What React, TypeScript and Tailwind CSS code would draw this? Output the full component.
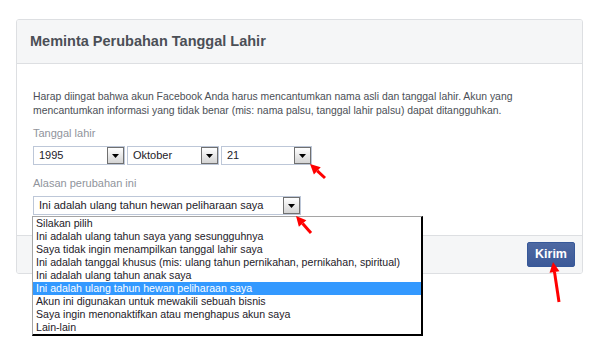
import React from 'react';

const reasons = [
  'Silakan pilih',
  'Ini adalah ulang tahun saya yang sesungguhnya',
  'Saya tidak ingin menampilkan tanggal lahir saya',
  'Ini adalah tanggal khusus (mis: ulang tahun pernikahan, pernikahan, spiritual)',
  'Ini adalah ulang tahun anak saya',
  'Ini adalah ulang tahun hewan peliharaan saya',
  'Akun ini digunakan untuk mewakili sebuah bisnis',
  'Saya ingin menonaktifkan atau menghapus akun saya',
  'Lain-lain',
];

function FakeSelect({ value, width }: { value: string; width: string }) {
  return (
    <div className={`${width} h-[19px] flex items-center border border-[#bdc7d8] bg-white`}>
      <span className="flex-1 pl-[5px] text-[11px] text-[#1d2129] truncate">{value}</span>
      <span className="w-[17px] h-[17px] flex items-center justify-center border border-[#707070] bg-gradient-to-b from-white to-[#d4d4d4]">
        <svg width="7" height="4" viewBox="0 0 7 4">
          <polygon points="0,0 7,0 3.5,4" fill="#000" />
        </svg>
      </span>
    </div>
  );
}

function RedArrow({ x1, y1, x2, y2 }: { x1: number; y1: number; x2: number; y2: number }) {
  // tail (x1,y1) -> tip (x2,y2)
  const a = Math.atan2(y2 - y1, x2 - x1);
  const len = 10;
  const w = 5;
  const bx = x2 - Math.cos(a) * len;
  const by = y2 - Math.sin(a) * len;
  const p1 = `${bx + Math.sin(a) * w},${by - Math.cos(a) * w}`;
  const p2 = `${bx - Math.sin(a) * w},${by + Math.cos(a) * w}`;
  return (
    <g>
      <line x1={x1} y1={y1} x2={bx} y2={by} stroke="#ff0000" strokeWidth="3" />
      <polygon points={`${x2},${y2} ${p1} ${p2}`} fill="#ff0000" />
    </g>
  );
}

export default function App() {
  return (
    <div className="relative w-[604px] h-[364px] bg-white font-['Liberation_Sans',Arial,sans-serif] text-[#4b4f56]">
      <div className="pt-[19px] pl-[16px]">
        <div className="w-[567px] border border-[#dddfe2] rounded-[3px] overflow-hidden">
          <div className="h-[44px] flex items-center px-[13px] bg-[#f5f6f7] border-b border-[#dddfe2]">
            <h2 className="text-[14.5px] font-bold text-[#4b4f56]">Meminta Perubahan Tanggal Lahir</h2>
          </div>
          <div className="pt-[26px] pb-[20px] px-[16px]">
            <p className="text-[10.4px] leading-[14px] text-[#4b4f56]">
              Harap diingat bahwa akun Facebook Anda harus mencantumkan nama asli dan tanggal lahir. Akun yang mencantumkan informasi yang tidak benar (mis: nama palsu, tanggal lahir palsu) dapat ditangguhkan.
            </p>
            <div className="mt-[8px] text-[11px] leading-[14px] text-[#90949c]">Tanggal lahir</div>
            <div className="flex gap-[2px] mt-[6px]">
              <FakeSelect value="1995" width="w-[92px]" />
              <FakeSelect value="Oktober" width="w-[92px]" />
              <FakeSelect value="21" width="w-[91px]" />
            </div>
            <div className="mt-[11px] text-[11px] leading-[14px] text-[#90949c]">Alasan perubahan ini</div>
            <div className="mt-[6px]">
              <FakeSelect value="Ini adalah ulang tahun hewan peliharaan saya" width="w-[268px]" />
            </div>
          </div>
          <div className="h-[38px] flex items-center justify-end pr-[7px] bg-[#f5f6f7] border-t border-[#dddfe2]">
            <button className="w-[48px] h-[25px] rounded-[2px] border border-[#365899] bg-gradient-to-b from-[#4e69a2] to-[#3b5998] text-white text-[12.5px] font-bold">
              Kirim
            </button>
          </div>
        </div>
      </div>

      <ul className="absolute left-[32px] top-[216px] w-[391px] bg-white border-l border-t border-[#a5a5a5] border-r-2 border-b-2 border-r-black border-b-black text-[10.6px] leading-[13px] text-[#1d2129]">
        {reasons.map((r, i) => (
          <li key={i} className={`pl-[3px] h-[13px] ${i === 5 ? 'bg-[#3399ff] text-white' : ''}`}>
            {r}
          </li>
        ))}
      </ul>

      <svg className="absolute left-0 top-0 pointer-events-none" width="604" height="364">
        <RedArrow x1={325} y1={178} x2={310} y2={164} />
        <RedArrow x1={311} y1={233} x2={296} y2={216} />
        <RedArrow x1={559} y1={302} x2={553} y2={262} />
      </svg>
    </div>
  );
}
